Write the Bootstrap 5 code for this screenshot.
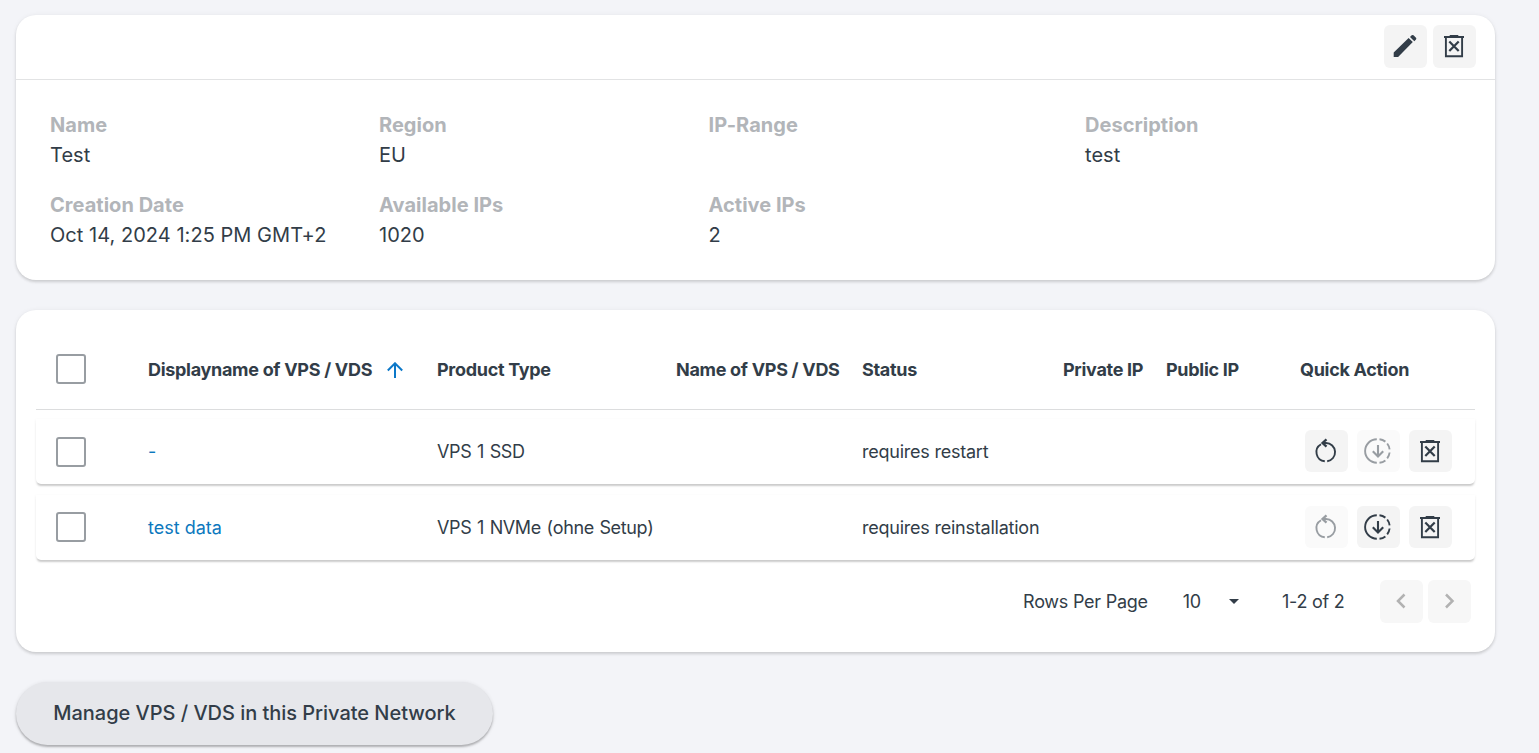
<!DOCTYPE html>
<html lang="en">
<head>
<meta charset="utf-8">
<meta name="viewport" content="width=device-width, initial-scale=1">
<title>Private Network</title>
<link href="https://cdn.jsdelivr.net/npm/bootstrap@5.3.0/dist/css/bootstrap.min.css" rel="stylesheet">
<style>
  body { background: #f3f4f8; color: #323d48; font-family: Inter, "Liberation Sans", sans-serif; }
  .page { padding: 15px 44px 8px 16px; }
  .panel { border: 0; border-radius: 20px; background: #fff; box-shadow: 0 2px 3px rgba(0,0,0,.15), 0 0 5px rgba(0,0,0,.05); }
  .panel-info { height: 265px; margin-bottom: 30px; }
  .panel-top { height: 65px; padding: 10px 19px 0 0; gap: 6px; border-bottom: 1px solid #e2e3e4; }
  .tool { display: grid; place-items: center; width: 43px; height: 43px; padding: 0 1px 1px 0; border: 0; border-radius: 6px; background: #f4f4f4; color: #323d48; flex: none; }
  .tool:disabled { background: #fafafa; color: #989da2; opacity: 1; border: 0; }
  .facts { display: grid; grid-template-columns: 329px 329.5px 376.5px 1fr; row-gap: 20px; padding: 30px 34px 0; font-size: 20px; line-height: 30px; }
  .facts dt { color: #b2b5b9; font-weight: 700; letter-spacing: .03px; }
  .facts dd { letter-spacing: .04px; margin: 0; }
  .panel-list { height: 342px; padding: 20px 20px 0; }
  .line { display: grid; grid-template-columns: 112px 289px 239px 186px 201px 103px 134px 1fr; align-items: center; font-size: 18px; white-space: nowrap; letter-spacing: -.23px; }
  .line-head { height: 80px; border-bottom: 1px solid #dcddde; font-weight: 700; letter-spacing: -.3px; margin-bottom: 9px; }
  .line-item { height: 65px; margin-bottom: 11px; background: #fff; border-radius: 0 0 5px 5px; box-shadow: 0 3px 2px -1px rgba(0,0,0,.17), 0 1px 3px rgba(0,0,0,.08); }
  .line-item .tool { height: 42px; padding: 0 1px 0 0; margin: -1px 0 1px; }
  .line a { color: #0c78be; text-decoration: none; letter-spacing: 0; }
  .product { font-kerning: none; letter-spacing: -.38px; word-spacing: 1px; }
  .tick.form-check-input { width: 30px; height: 30px; margin: 0 0 0 20px; border: 2px solid #989da2; border-radius: 3px; }
  .line-head .tick, .line-item + .line-item .tick { margin-bottom: 2px; }
  .actions { gap: 9px; padding-left: 5px; }
  .pager { padding-right: 4px; padding-top: 9px; font-size: 18px; letter-spacing: -.25px; }
  .pager .tool { background: #f7f7f7; color: #b2b2b2; }
  .manage { margin-top: 30px; width: 477px; height: 63px; padding: 0 0 2px 0; border: 0; border-radius: 32px; background: #e6e7eb; color: #323d48; font-size: 20px; font-weight: 500; letter-spacing: -.03px; white-space: nowrap; box-shadow: 0 2px 2px rgba(0,0,0,.22), 0 1px 4px rgba(0,0,0,.12); }
</style>
</head>
<body>
<svg class="d-none">
  <symbol id="edit" viewBox="0 0 28 28"><path fill="currentColor" d="M2.700 20.600 17.600 5.900l4.200 4.200L7.100 25H2.700zM19 4.900l1.700-1.600q.9-.8 1.800 0l2.500 2.500q.7.800 0 1.700L23.300 9.200z"/></symbol>
  <symbol id="bin" viewBox="0 0 28 28"><path fill="none" stroke="currentColor" stroke-width="1.900" d="M4 5h20M9.700 3.900h8.600M5.900 5v19.200h16.200V5"/><path stroke="currentColor" stroke-width="2.200" d="m9.300 9.500 9.400 9.600m0-9.600-9.400 9.600"/></symbol>
  <symbol id="restart" viewBox="0 0 28 28"><g fill="none" stroke="currentColor" stroke-width="1.900"><path d="M9 7.200A9.200 9.200 0 0 0 12.800 24.300M15.200 24.300A9.200 9.200 0 0 0 14 6H11"/><path stroke-width="2.300" d="m14.500 2.300-4 3.700 4 3.700"/></g></symbol>
  <symbol id="reinstall" viewBox="0 0 28 28"><g fill="none" stroke="currentColor" stroke-width="1.900"><path d="M12.800 2.300a11.600 11.600 0 0 0 0 23.400M15.500 2.300q3.200.4 5.900 2.300M23.200 6.500q2 2.600 2.400 5.900M25.600 15.500q-.4 3.200-2.400 5.900M21.400 23.400q-2.600 1.900-5.900 2.300"/><path stroke-width="2.100" d="M14 8v11.500M8.800 14.300 14 19.500l5.200-5.200"/></g></symbol>
</svg>
<main class="page">
  <section class="card panel panel-info">
    <div class="panel-top d-flex justify-content-end">
      <button class="btn tool" aria-label="Edit"><svg width="28" height="28"><use href="#edit"/></svg></button>
      <button class="btn tool" aria-label="Delete"><svg width="28" height="28"><use href="#bin"/></svg></button>
    </div>
    <dl class="facts mb-0">
      <div><dt>Name</dt><dd>Test</dd></div>
      <div><dt>Region</dt><dd>EU</dd></div>
      <div><dt>IP-Range</dt><dd></dd></div>
      <div><dt>Description</dt><dd>test</dd></div>
      <div><dt>Creation Date</dt><dd>Oct 14, 2024 1:25 PM GMT+2</dd></div>
      <div><dt>Available IPs</dt><dd>1020</dd></div>
      <div><dt>Active IPs</dt><dd>2</dd></div>
    </dl>
  </section>

  <section class="card panel panel-list">
    <div class="line line-head">
      <input class="form-check-input tick" type="checkbox" aria-label="Select all">
      <div class="d-flex align-items-center"><span>Displayname of VPS / VDS</span><svg style="margin-left:15px" width="16" height="16" viewBox="0 0 16 16" fill="none" stroke="#0c78c8" stroke-width="2"><path d="M8 16V1.500M.8 8.500 8 1.300l7.200 7.200"/></svg></div>
      <span>Product Type</span><span>Name of VPS / VDS</span><span>Status</span><span>Private IP</span><span>Public IP</span><span>Quick Action</span>
    </div>
    <div class="line line-item">
      <input class="form-check-input tick" type="checkbox" aria-label="Select row">
      <a href="#">-</a><span class="product">VPS 1 SSD</span><span></span><span>requires restart</span><span></span><span></span>
      <div class="d-flex actions">
        <button class="btn tool" aria-label="Restart"><svg width="28" height="28"><use href="#restart"/></svg></button>
        <button class="btn tool" aria-label="Reinstall" disabled><svg width="28" height="28"><use href="#reinstall"/></svg></button>
        <button class="btn tool" aria-label="Delete"><svg width="28" height="28"><use href="#bin"/></svg></button>
      </div>
    </div>
    <div class="line line-item">
      <input class="form-check-input tick" type="checkbox" aria-label="Select row">
      <a href="#">test data</a><span class="product">VPS 1 NVMe (ohne Setup)</span><span></span><span>requires reinstallation</span><span></span><span></span>
      <div class="d-flex actions">
        <button class="btn tool" aria-label="Restart" disabled><svg width="28" height="28"><use href="#restart"/></svg></button>
        <button class="btn tool" aria-label="Reinstall"><svg width="28" height="28"><use href="#reinstall"/></svg></button>
        <button class="btn tool" aria-label="Delete"><svg width="28" height="28"><use href="#bin"/></svg></button>
      </div>
    </div>
    <div class="pager d-flex align-items-center justify-content-end">
      <span>Rows Per Page</span>
      <span style="margin-left:35px">10</span>
      <svg style="margin-left:28px" width="10" height="5" viewBox="0 0 10 5"><path fill="#323d48" d="M0 0h10L5 5z"/></svg>
      <span style="margin:0 35.500px 0 43px">1-2 of 2</span>
      <button class="btn tool" style="margin-right:5px" aria-label="Previous"><svg width="28" height="28" viewBox="0 0 28 28" fill="none" stroke="currentColor" stroke-width="2.500"><path d="m17.500 7.500-6.500 6.500 6.500 6.500"/></svg></button>
      <button class="btn tool" aria-label="Next"><svg width="28" height="28" viewBox="0 0 28 28" fill="none" stroke="currentColor" stroke-width="2.500"><path d="m11 7.500 6.500 6.500-6.500 6.500"/></svg></button>
    </div>
  </section>

  <button class="btn manage">Manage VPS / VDS in this Private Network</button>
</main>
<script src="https://cdn.jsdelivr.net/npm/bootstrap@5.3.0/dist/js/bootstrap.bundle.min.js"></script>
</body>
</html>
